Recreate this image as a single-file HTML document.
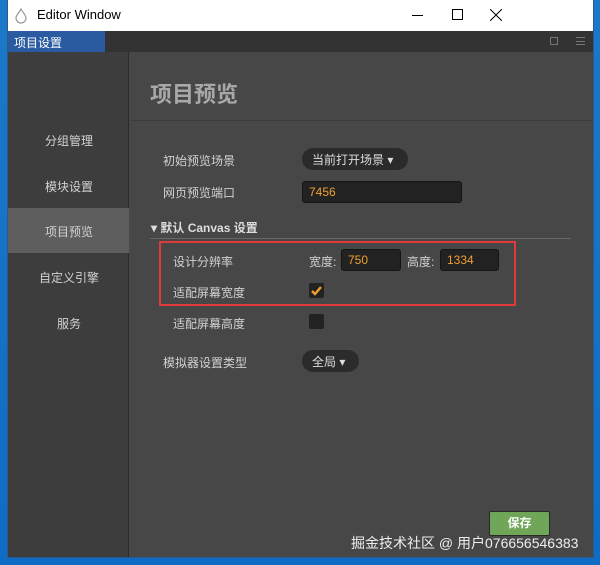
<!DOCTYPE html><html><head><meta charset="utf-8"><style>
*{margin:0;padding:0;box-sizing:border-box}
body{width:600px;height:565px;background:linear-gradient(#1c78c8,#0e6cc4);font-family:"Liberation Sans","Noto Sans CJK SC",sans-serif;position:relative;overflow:hidden}
.a{position:absolute}
.win{left:7px;top:0;width:587px;height:558px;background:#474747;border:1px solid #2a5a8a}
.t{color:#d2d2d2;font-size:12px}
.inp{background:#222;border:1px solid #151515;border-radius:3px;color:#f0a030;font-size:12px;padding:3px 6px;height:22px}
.pill{background:#2b2b2b;border-radius:11px;color:#ddd;font-size:12px;height:22px;padding:3px 10px}
</style></head><body>
<div class="a win"></div>
<div class="a" style="left:8px;top:0;width:585px;height:31px;background:#fff"></div>
<svg class="a" style="left:14px;top:8px" width="14" height="16"><path d="M7 1C5 5 2 7 2 10a5 5 0 0010 0C12 7 9 5 7 1z" fill="none" stroke="#999" stroke-width="1.2"/></svg>
<div class="a" style="left:37px;top:7px;font-size:13px;color:#000">Editor Window</div>
<div class="a" style="left:412px;top:15px;width:11px;height:1px;background:#000"></div>
<div class="a" style="left:452px;top:9px;width:11px;height:11px;border:1px solid #000"></div>
<svg class="a" style="left:490px;top:9px" width="12" height="12"><path d="M0 0L12 12M12 0L0 12" stroke="#000"/></svg>
<div class="a" style="left:8px;top:31px;width:585px;height:21px;background:#333"></div>
<div class="a" style="left:8px;top:31px;width:97px;height:21px;background:#2a5ba0;color:#fff;font-size:12px;padding:3px 6px">项目设置</div>
<div class="a" style="left:550px;top:37px;width:8px;height:8px;border:1px solid #777"></div>
<div class="a" style="left:576px;top:37px;width:9px;height:8px;border-top:1px solid #777;border-bottom:1px solid #777"></div>
<div class="a" style="left:576px;top:41px;width:9px;height:1px;background:#777"></div>
<div class="a" style="left:8px;top:52px;width:121px;height:505px;background:#3d3d3d;border-right:1px solid #2c2c2c"></div>
<div class="a" style="left:8px;top:208px;width:121px;height:45px;background:#5e5e5e"></div>
<div class="a t" style="left:45px;top:132px">分组管理</div>
<div class="a t" style="left:45px;top:178px">模块设置</div>
<div class="a t" style="left:45px;top:223px">项目预览</div>
<div class="a t" style="left:39px;top:269px">自定义引擎</div>
<div class="a t" style="left:57px;top:315px">服务</div>
<div class="a" style="left:150px;top:77px;font-size:22px;font-weight:bold;color:#a8a8a8">项目预览</div>
<div class="a" style="left:130px;top:120px;width:462px;height:1px;background:#3c3c3c"></div>
<div class="a t" style="left:163px;top:152px">初始预览场景</div>
<div class="a pill" style="left:302px;top:148px;width:106px">当前打开场景 ▾</div>
<div class="a t" style="left:163px;top:184px">网页预览端口</div>
<div class="a inp" style="left:302px;top:181px;width:160px">7456</div>
<div class="a" style="left:151px;top:219px;font-size:12px;font-weight:bold;color:#ddd">▾ 默认 Canvas 设置</div>
<div class="a" style="left:150px;top:238px;width:421px;height:1px;background:#666"></div>
<div class="a" style="left:159px;top:241px;width:357px;height:65px;border:2px solid #e03a3a"></div>
<div class="a t" style="left:173px;top:253px">设计分辨率</div>
<div class="a t" style="left:309px;top:253px">宽度:</div>
<div class="a inp" style="left:341px;top:249px;width:60px">750</div>
<div class="a t" style="left:407px;top:253px">高度:</div>
<div class="a inp" style="left:440px;top:249px;width:59px">1334</div>
<div class="a t" style="left:173px;top:284px">适配屏幕宽度</div>
<div class="a" style="left:309px;top:283px;width:15px;height:15px;background:#222;border-radius:2px"></div>
<svg class="a" style="left:310px;top:284px" width="13" height="13"><path d="M2 7l3 3 6-7" fill="none" stroke="#f0a030" stroke-width="2.4"/></svg>
<div class="a t" style="left:173px;top:315px">适配屏幕高度</div>
<div class="a" style="left:309px;top:314px;width:15px;height:15px;background:#222;border-radius:2px"></div>
<div class="a t" style="left:163px;top:354px">模拟器设置类型</div>
<div class="a pill" style="left:302px;top:350px;width:57px">全局 ▾</div>
<div class="a" style="left:489px;top:511px;width:61px;height:25px;background:#6fa657;border:1px solid #2a2a2a;border-radius:2px;color:#fff;font-size:12px;font-weight:bold;text-align:center;line-height:23px">保存</div>
<div class="a" style="left:351px;top:533px;color:#eee;font-size:14px">掘金技术社区 @ 用户076656546383</div>
</body></html>
